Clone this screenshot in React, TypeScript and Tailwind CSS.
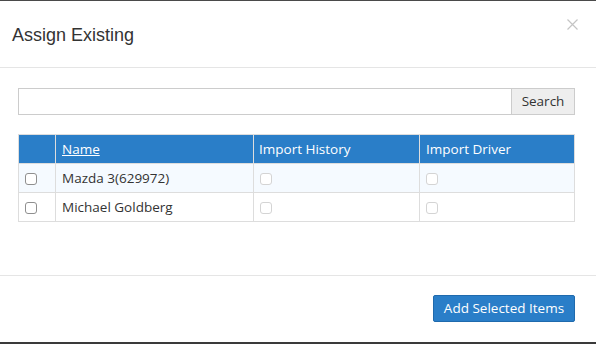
import React from "react";

function Box({ disabled }: { disabled?: boolean }) {
  return (
    <span
      className={
        "inline-block w-[12px] h-[12px] rounded-[3px] border bg-white align-middle " +
        (disabled ? "border-[#d4d4d4]" : "border-[#8f8f8f]")
      }
    />
  );
}

const rows = ["Mazda 3(629972)", "Michael Goldberg"];

export default function App() {
  return (
    <div className="w-[596px] h-[344px] bg-white flex flex-col font-['Open_Sans',sans-serif] text-[#333] overflow-hidden">
      <div className="h-[1px] bg-[#4a4a4a]" />
      {/* header */}
      <div className="h-[67px] border-b border-[#e5e5e5] flex items-center justify-between pl-[12px] pr-[18px]">
        <h4 className="text-[18px] font-['Liberation_Sans',Arial,sans-serif] text-[#333] pt-[3px]">Assign Existing</h4>
        <svg width="11" height="11" viewBox="0 0 11 11" className="-mt-[19px]">
          <path d="M0.5 0.5L10.5 10.5M10.5 0.5L0.5 10.5" stroke="#c4c4c4" strokeWidth="1.2" />
        </svg>
      </div>
      {/* body */}
      <div className="px-[18px] pt-[20px] pr-[21px] h-[207px]">
        <div className="flex h-[27px]">
          <input className="flex-1 border border-[#ccc] outline-none" />
          <button className="w-[63px] border border-l-0 border-[#ccc] bg-[#eee] text-[13.5px] text-[#333]">Search</button>
        </div>
        <table className="mt-[19px] w-full border-collapse text-[13.5px]">
          <thead>
            <tr className="bg-[#2a7ec8] text-white h-[29px]">
              <th className="w-[37px] border border-[#ddd]" />
              <th className="w-[198px] border border-[#ddd] text-left font-normal pl-[6px]">
                <span className="underline">Name</span>
              </th>
              <th className="w-[166px] border border-[#ddd] text-left font-normal pl-[5px]">Import History</th>
              <th className="border border-[#ddd] text-left font-normal pl-[6px]">Import Driver</th>
            </tr>
          </thead>
          <tbody>
            {rows.map((r, i) => (
              <tr key={r} className={"h-[29px] " + (i === 0 ? "bg-[#f5faff]" : "bg-white")}>
                <td className="border border-[#ddd] pl-[6px]"><Box /></td>
                <td className="border border-[#ddd] pl-[6px]">{r}</td>
                <td className="border border-[#ddd] pl-[6px]"><Box disabled /></td>
                <td className="border border-[#ddd] pl-[6px]"><Box disabled /></td>
              </tr>
            ))}
          </tbody>
        </table>
      </div>
      {/* footer */}
      <div className="border-t border-[#e5e5e5] flex-1 flex justify-end items-start pt-[19px] pr-[21px]">
        <button className="h-[27px] w-[142px] bg-[#2a7ec8] border border-[#1f6aad] rounded-[2px] text-white text-[13.5px]">
          Add Selected Items
        </button>
      </div>
      <div className="h-[2px] bg-[#3a3a3a]" />
    </div>
  );
}
